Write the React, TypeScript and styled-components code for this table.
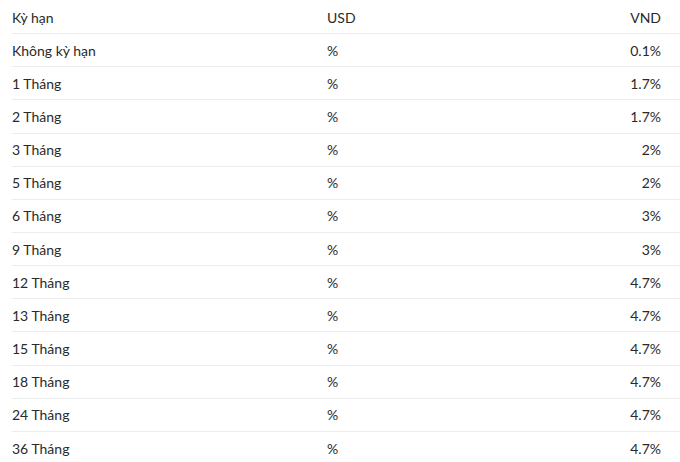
import React from "react";
import styled, { createGlobalStyle } from "styled-components";

const Global = createGlobalStyle`
  html, body { margin: 0; padding: 0; background: #fff; }
  body { font-family: "Lato", "Open Sans", sans-serif; }
`;

const Table = styled.div`
  width: 680px;
  padding-top: 1px;
  padding-left: 12px;
  box-sizing: border-box;
`;

const Row = styled.div<{ $last?: boolean }>`
  display: grid;
  grid-template-columns: 315px 1fr 100px;
  align-items: center;
  height: 33.15px;
  box-sizing: border-box;
  border-bottom: ${(p) => (p.$last ? "none" : "1.5px solid #ececec")};
  font-size: 14px;
  color: #2a2a2a;
  padding-right: 19px;
`;

const Cell = styled.div<{ $right?: boolean }>`
  text-align: ${(p) => (p.$right ? "right" : "left")};
  white-space: nowrap;
`;

const rows: [string, string, string][] = [
  ["Không kỳ hạn", "%", "0.1%"],
  ["1 Tháng", "%", "1.7%"],
  ["2 Tháng", "%", "1.7%"],
  ["3 Tháng", "%", "2%"],
  ["5 Tháng", "%", "2%"],
  ["6 Tháng", "%", "3%"],
  ["9 Tháng", "%", "3%"],
  ["12 Tháng", "%", "4.7%"],
  ["13 Tháng", "%", "4.7%"],
  ["15 Tháng", "%", "4.7%"],
  ["18 Tháng", "%", "4.7%"],
  ["24 Tháng", "%", "4.7%"],
  ["36 Tháng", "%", "4.7%"],
];

export default function App() {
  return (
    <>
      <Global />
      <Table>
        <Row>
          <Cell>Kỳ hạn</Cell>
          <Cell>USD</Cell>
          <Cell $right>VND</Cell>
        </Row>
        {rows.map((r, i) => (
          <Row key={r[0]} $last={i === rows.length - 1}>
            <Cell>{r[0]}</Cell>
            <Cell>{r[1]}</Cell>
            <Cell $right>{r[2]}</Cell>
          </Row>
        ))}
      </Table>
    </>
  );
}
